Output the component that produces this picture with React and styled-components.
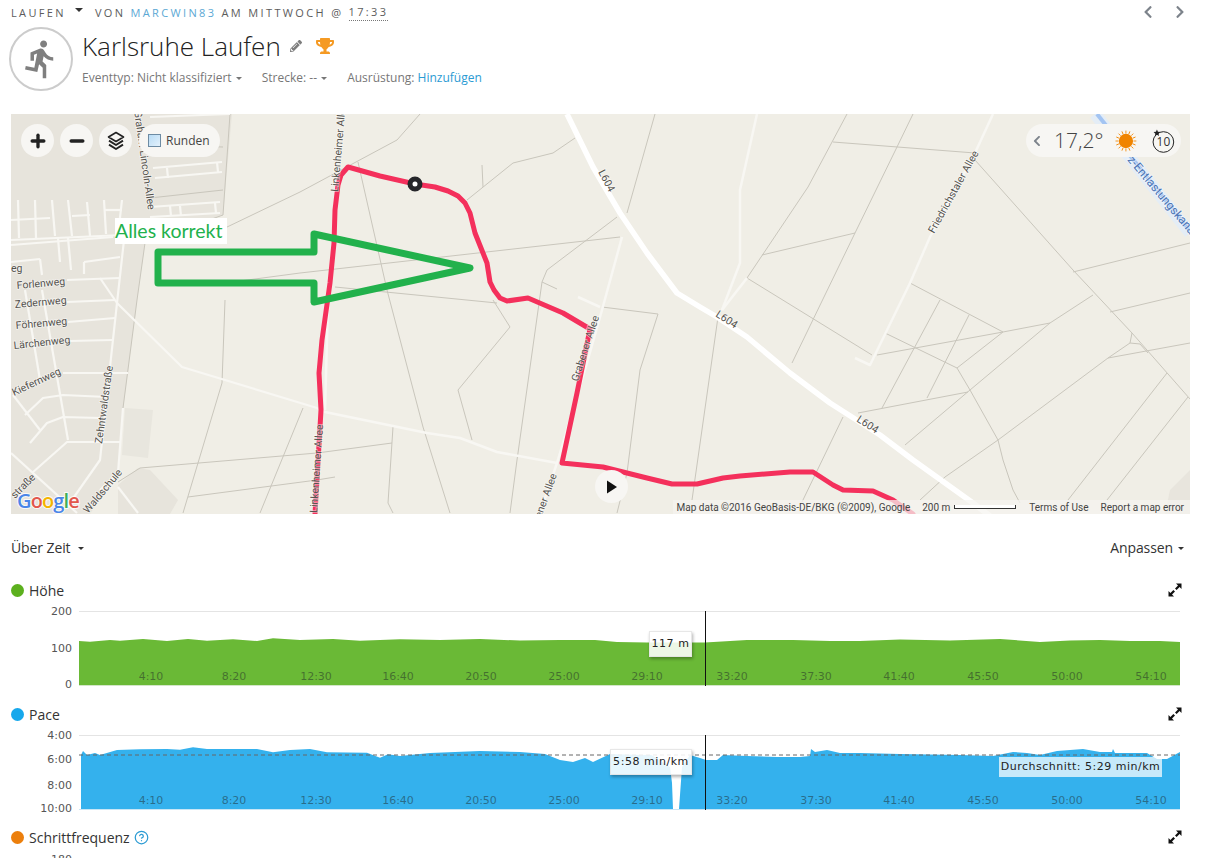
import React from 'react';
import styled, { createGlobalStyle } from 'styled-components';
import { FaPencilAlt, FaTrophy, FaChevronLeft, FaChevronRight } from 'react-icons/fa';
import { MdDirectionsRun } from 'react-icons/md';
import { Plus, Minus, CircleHelp } from 'lucide-react';

const GREY_LINES = [
  '420,114 397,140 300,192 225,228',
  '358,162 387,290 423,427 450,513',
  '240,281 300,273 620,237',
  '335,287 497,303',
  '482,165 483,187',
  '467,200 513,163 553,153 575,138',
  '655,114 627,213',
  '617,217 547,270 542,282 517,460 510,513',
  '542,282 557,289',
  '493,300 510,327 458,390 472,440',
  '602,307 658,314 640,370 627,473 617,513',
  '393,427 388,503 393,513',
  '118,482 140,468 317,453 392,443',
  '188,497 317,480 335,477',
  '225,300 222,383 183,513',
  '303,408 260,513',
  '847,114 808,187 747,278',
  '913,114 897,147 855,233 792,363',
  '833,142 975,153',
  '855,233 762,255',
  '975,160 1073,270 1132,333 1190,399',
  '1190,243 1073,272',
  '1093,295 1050,323 970,390 905,445',
  '1190,293 1110,312',
  '747,278 872,355',
  '910,283 1003,332 957,368',
  '885,333 957,368 970,390 998,440 1003,460 1013,490 1020,503',
  '877,355 1003,332 1050,323',
  '940,300 882,408',
  '969,315 927,398',
  '858,413 968,392',
  '843,417 802,502',
  '718,317 692,500',
  '1132,333 1130,343 1108,358 998,440 945,477 920,500',
  '1130,343 1140,344 1148,353',
  '1108,358 1190,343',
  '1167,373 1068,500',
  '1188,397 1107,500',
  '145,243 137,300 123,408',
  '230,114 223,215 145,243',
  '150,198 223,190',
  '150,145 223,147',
];

const TOWN_ROADS = [
  '150,117 230,114',
  '153,168 222,162', '155,178 222,172', '167,168 168,178', '217,162 218,172',
  '150,207 220,202', '150,217 220,213', '170,206 171,216', '180,206 181,216', '215,203 216,213',
  '11,240 123,235', '11,245 113,237',
  '18,200 19,238', '35,200 36,238', '52,200 55,236', '68,200 72,236', '87,202 90,236', '104,200 106,234', '122,200 118,235',
  '11,220 50,218', '72,216 90,215', '104,210 122,210',
  '58,238 60,262', '68,238 71,270', '84,262 120,257', '84,262 84,274',
  '11,262 40,259', '40,259 42,275',
  '67,280 120,278', '100,278 117,303',
  '67,302 115,300', '68,322 115,318', '70,341 112,340', '63,373 128,373',
  '25,290 40,380', '42,290 68,440',
  '124,240 117,303 110,367 100,460 67,507',
  '13,395 40,430', '25,415 43,398 63,395 107,397', '30,443 47,423 63,417 100,418',
  '11,453 77,513', '32,473 67,442 120,442',
  '123,408 118,473 100,490', '118,487 138,513',
  '117,303 182,367 317,408',
];

const THIN_ROADS = [
  '993,114 975,153 930,237 910,283 870,365 855,358',
  '757,114 740,190 740,263 722,310',
  '747,278 722,310',
  '622,237 602,310 587,363 557,463 540,513',
  '578,297 600,307',
  '317,408 325,412 427,433 460,438 497,452 557,463',
  '328,303 325,410',
];

const MAIN_ROAD = '567,114 593,167 620,213 647,253 677,293 700,307 717,317 747,337 790,373 830,403 880,435 913,460 973,503 990,516';

const ROUTE = '315,514 321,410 319,373 322,340 330,283 334,243 335,210 338,185 341,175 348,167 380,176 415,184 435,187 448,191 458,196 465,203 470,213 475,233 481,248 487,263 490,282 494,290 500,298 507,301 528,298 563,313 590,329 577,393 562,463 603,467 647,478 672,484 683,484 697,484 723,478 740,476 790,472 813,472 833,485 843,490 873,491 893,500 913,514';

const ARROW = '158,283 158,252 314,252 314,234 470,268 314,302 314,283';

const MAP_LABELS = [
  { text: 'Graham-Lincoln-Allee', x: 148, y: 210, angle: 82, end: true },
  { text: 'Linkenheimer Allee', x: 338, y: 192, angle: -85 },
  { text: 'Linkenheimer Allee', x: 317, y: 513, angle: -86 },
  { text: 'Grabener Allee', x: 578, y: 382, angle: -72 },
  { text: 'Grabener Allee', x: 557, y: 475, angle: -70, end: true },
  { text: 'Friedrichstaler Allee', x: 934, y: 234, angle: -61 },
  { text: 'L604', x: 598, y: 172, angle: 62 },
  { text: 'L604', x: 715, y: 316, angle: 33 },
  { text: 'L604', x: 856, y: 421, angle: 33 },
  { text: 'Zehntwaldstraße', x: 102, y: 444, angle: -82 },
  { text: 'Waldschule', x: 88, y: 514, angle: -50 },
  { text: 'straße', x: 15, y: 499, angle: -45 },
  { text: 'eg', x: 11, y: 272, angle: 0 },
  { text: 'Forlenweg', x: 17, y: 289, angle: -5 },
  { text: 'Zedernweg', x: 15, y: 308, angle: -5 },
  { text: 'Föhrenweg', x: 16, y: 329, angle: -5 },
  { text: 'Lärchenweg', x: 14, y: 349, angle: -6 },
  { text: 'Kiefernweg', x: 14, y: 396, angle: -25 },
];

const TIME_TICKS = [
  ['4:10', 151], ['8:20', 234], ['12:30', 316], ['16:40', 398], ['20:50', 481], ['25:00', 564], ['29:10', 647],
  ['33:20', 732], ['37:30', 816], ['41:40', 899], ['45:50', 983], ['50:00', 1067], ['54:10', 1151],
];

const HEIGHT_PROFILE = [
  [79, 641], [90, 641.7], [110, 640], [120, 640.7], [143, 639], [167, 641], [188, 639], [207, 640.7], [233, 639.3],
  [257, 641], [273, 638.3], [300, 640], [333, 639], [360, 640.7], [400, 639.3], [440, 640], [480, 639], [520, 640.5],
  [560, 640], [595, 640], [617, 642], [647, 642.5], [705, 642.5], [747, 640], [793, 640], [830, 641], [860, 641],
  [900, 639.5], [950, 640.5], [1000, 639], [1040, 642], [1070, 640.5], [1100, 640], [1130, 641], [1160, 641], [1180, 642],
];

const PACE_PROFILE = [
  [81, 755], [83, 751], [87, 755], [95, 753], [100, 755], [117, 750], [140, 749.3], [167, 749], [180, 749.7], [193, 747.3],
  [207, 749], [257, 749], [273, 752.3], [290, 750], [310, 749], [327, 752.3], [367, 752.7], [380, 757.7], [388, 754.3],
  [400, 756], [430, 753], [480, 751], [520, 752], [545, 754], [560, 760], [573, 762], [585, 758], [593, 762], [610, 754],
  [643, 755], [651, 755], [655, 757], [670, 767], [672, 783], [673, 809], [679, 809], [682, 767], [690, 755], [700, 758],
  [706, 760], [717, 760], [723, 755], [747, 756], [777, 757], [800, 757], [810, 756], [811, 749], [815, 752], [827, 750],
  [840, 753], [860, 753], [900, 754], [960, 755], [993, 756], [1013, 752], [1027, 753], [1040, 755], [1057, 751], [1083, 749],
  [1100, 752], [1112, 752], [1113, 749], [1115, 753], [1147, 753], [1157, 759], [1167, 759], [1180, 752],
];

const GlobalStyle = createGlobalStyle`
  html, body {
    margin: 0;
    height: 858px;
    overflow: hidden;
    background: #fff;
  }
  body {
    font-family: "Open Sans", "Liberation Sans", sans-serif;
    color: #333;
  }
`;

const Page = styled.div`
  width: 1205px;
`;

const MetaRow = styled.div`
  display: flex;
  align-items: center;
  justify-content: space-between;
  height: 24px;
  padding: 0 18px 0 11px;
`;

const Breadcrumb = styled.div`
  display: flex;
  align-items: center;
  font-size: 11px;
  letter-spacing: 2.35px;
  color: #5c5c5c;
  white-space: pre;
`;

const Caret = styled.span`
  width: 0;
  height: 0;
  margin: ${p => p.$margin || '0'};
  border-left: ${p => p.$size || 4}px solid transparent;
  border-right: ${p => p.$size || 4}px solid transparent;
  border-top: ${p => p.$size || 4}px solid ${p => p.$color || '#333'};
  display: inline-block;
`;

const UserLink = styled.span`
  color: #5ba8d4;
`;

const TimeStamp = styled.span`
  border-bottom: 1px dotted #777;
  padding-bottom: 1px;
`;

const Pager = styled.div`
  display: flex;
  gap: 18px;
  color: #7d838b;
  font-size: 14px;
`;

const Head = styled.header`
  display: flex;
  gap: 9px;
  margin: 3px 0 23px 9px;
  height: 64px;
`;

const Avatar = styled.div`
  width: 60px;
  height: 60px;
  border: 2px solid #ccc;
  border-radius: 50%;
  display: flex;
  align-items: center;
  justify-content: center;
  color: #7f7f7f;
  font-size: 42px;
`;

const HeadText = styled.div`
  display: flex;
  flex-direction: column;
`;

const TitleRow = styled.div`
  display: flex;
  align-items: center;
  height: 38px;
`;

const Title = styled.h1`
  margin: 0;
  font-size: 26px;
  font-weight: 300;
  color: #222;
  white-space: nowrap;
`;

const EditIcon = styled(FaPencilAlt)`
  color: #7d7d7d;
  font-size: 12px;
  margin-left: 9px;
`;

const TrophyIcon = styled(FaTrophy)`
  color: #f59a23;
  font-size: 18px;
  margin-left: 14px;
`;

const InfoRow = styled.div`
  display: flex;
  align-items: center;
  margin-top: 4px;
  font-size: 12px;
  color: #777;
`;

const InfoItem = styled.span`
  display: inline-flex;
  align-items: center;
  margin-right: ${p => p.$gap}px;
  white-space: pre;
`;

const InfoLink = styled.span`
  color: #2b9bd3;
`;

const MapFrame = styled.section`
  position: relative;
  width: 1179px;
  height: 400px;
  margin-left: 11px;
  overflow: hidden;
  background: #f0eee6;
`;

const MapSvg = styled.svg`
  display: block;
`;

const GreyLine = styled.polyline`
  fill: none;
  stroke: #c9c6bc;
  stroke-width: 1;
`;

const RoadLine = styled.polyline`
  fill: none;
  stroke: ${p => p.$color || '#f8f7f3'};
  stroke-width: ${p => p.$width || 2.5}px;
  stroke-linejoin: round;
`;

const RoutePath = styled.polyline`
  fill: none;
  stroke: #f4305c;
  stroke-width: 5px;
  stroke-linejoin: round;
  stroke-linecap: round;
`;

const ArrowPath = styled.polygon`
  fill: none;
  stroke: #22b14c;
  stroke-width: 7px;
  stroke-linejoin: round;
`;

const MapLabel = styled.text`
  font-family: Roboto, "Liberation Sans", sans-serif;
  font-size: 10.5px;
  fill: #55534e;
  paint-order: stroke;
  stroke: rgba(255, 255, 255, 0.55);
  stroke-width: 1.5px;
`;

const CanalLabel = styled(MapLabel)`
  font-size: 12px;
  fill: #4b74b5;
`;

const GoogleMark = styled.text`
  font-family: "Open Sans", "Liberation Sans", sans-serif;
  font-size: 20px;
  font-weight: 600;
  letter-spacing: -0.9px;
  paint-order: stroke;
  stroke: rgba(255, 255, 255, 0.8);
  stroke-width: 2px;
`;

const Controls = styled.div`
  position: absolute;
  left: 10px;
  top: 10px;
  display: flex;
  gap: 6px;
`;

const RoundButton = styled.div`
  width: 33px;
  height: 33px;
  border-radius: 50%;
  background: #f7f6f3;
  display: flex;
  align-items: center;
  justify-content: center;
  color: #222;
`;

const LapsPill = styled.div`
  display: flex;
  align-items: center;
  gap: 5px;
  height: 33px;
  width: 81px;
  margin-left: 1px;
  box-sizing: border-box;
  padding-left: 9px;
  border-radius: 17px;
  background: #f7f6f3;
  font-size: 12px;
  color: #444;
`;

const CheckBox = styled.span`
  width: 11px;
  height: 11px;
  border: 1px solid #6d8ba3;
  background: linear-gradient(135deg, #b9dcf5, #e3f1fb);
`;

const WeatherPill = styled.div`
  position: absolute;
  right: 9px;
  top: 10px;
  width: 155px;
  height: 33px;
  box-sizing: border-box;
  padding: 0 5px;
  display: flex;
  align-items: center;
  border-radius: 17px;
  background: #f7f6f3;
  color: #7d838b;
  font-size: 12px;
`;

const Temperature = styled.span`
  margin: 0 12px 0 11px;
  font-size: 21px;
  font-weight: 300;
  color: #444;
  line-height: 1;
`;

const WindSvg = styled.svg`
  margin-left: 13px;
`;

const WindText = styled.text`
  font-family: "Open Sans", "Liberation Sans", sans-serif;
  font-size: 12px;
  fill: #333;
`;

const PlayButton = styled(RoundButton)`
  position: absolute;
  left: 584px;
  top: 356px;
`;

const AnnotationNote = styled.div`
  position: absolute;
  left: 104px;
  top: 104px;
  width: 112px;
  height: 26px;
  box-sizing: border-box;
  background: #fff;
  color: #22b14c;
  font-family: Lato, "Liberation Sans", sans-serif;
  font-size: 19.5px;
  line-height: 26px;
  white-space: nowrap;
`;

const Attribution = styled.div`
  position: absolute;
  right: 0;
  bottom: 0;
  display: flex;
  align-items: center;
  height: 14px;
  background: rgba(245, 244, 240, 0.72);
  font-family: Roboto, "Liberation Sans", sans-serif;
  font-size: 10px;
  color: #444;
  white-space: nowrap;
`;

const AttributionItem = styled.span`
  display: flex;
  align-items: center;
  padding: 0 ${p => p.$right || 6}px 0 ${p => p.$left || 6}px;
`;

const ScaleBar = styled.span`
  display: inline-block;
  width: 60px;
  height: 3px;
  margin-left: 4px;
  border: 1px solid #333;
  border-top: none;
  background: #fff;
`;

const ViewBar = styled.div`
  display: flex;
  justify-content: space-between;
  align-items: center;
  height: 18px;
  margin-top: 24px;
  padding: 0 21px 0 11px;
  font-size: 14px;
  letter-spacing: -0.1px;
  color: #333;
`;

const ViewItem = styled.span`
  display: inline-flex;
  align-items: center;
`;

const ChartHeader = styled.div`
  display: flex;
  align-items: center;
  height: 16px;
  margin-top: ${p => p.$top || 0}px;
  padding: 0 23px 0 11px;
  font-size: 14px;
  color: #333;
`;

const Dot = styled.span`
  width: 13px;
  height: 13px;
  border-radius: 50%;
  margin-right: 5px;
  background: ${p => p.$color};
`;

const ChartName = styled.span`
  flex: none;
`;

const HelpIcon = styled(CircleHelp)`
  margin-left: 4px;
  color: #2b9bd3;
`;

const ExpandSvg = styled.svg`
  margin-left: auto;
`;

const ChartWrap = styled.div`
  position: relative;
  height: ${p => p.$height}px;
  margin-top: 6px;
`;

const ChartSvg = styled.svg`
  display: block;
`;

const AxisText = styled.text`
  font-family: "DejaVu Sans", sans-serif;
  font-size: 11px;
  fill: #555;
  dominant-baseline: middle;
`;

const TickText = styled(AxisText)`
  fill: rgba(30, 40, 40, 0.5);
  text-anchor: middle;
`;

const ChartTip = styled.div`
  position: absolute;
  left: ${p => p.$left}px;
  top: ${p => p.$top}px;
  width: ${p => p.$width}px;
  height: 26px;
  box-sizing: border-box;
  border: 1px solid rgba(225, 225, 225, 0.8);
  background: rgba(255, 255, 255, 0.88);
  box-shadow: 1px 2px 3px rgba(0, 0, 0, 0.3);
  font-family: "DejaVu Sans", sans-serif;
  font-size: 11px;
  letter-spacing: 0.55px;
  line-height: 24px;
  text-align: center;
  color: #222;
  white-space: nowrap;
`;

const AverageTag = styled.div`
  position: absolute;
  left: 999px;
  top: 29px;
  width: 163px;
  height: 20px;
  background: rgba(255, 255, 255, 0.72);
  font-family: "DejaVu Sans", sans-serif;
  font-size: 11px;
  letter-spacing: 0.5px;
  line-height: 20px;
  text-align: center;
  color: #222;
  white-space: nowrap;
`;

const ExpandIcon = () => (
  <ExpandSvg width="14" height="14" viewBox="0 0 14 14">
    <path d="M8 0.5h5.5V6L11.6 4.1 8.6 7 7 5.4l3-3zM6 13.5H0.5V8l1.9 1.9 3-2.9L7 8.6l-3 3z" fill="#111" />
  </ExpandSvg>
);

const LayersIcon = () => (
  <svg width="18" height="20" viewBox="0 0 18 20">
    <path d="M9 1.5 16.5 6 9 10.5 1.5 6Z" fill="none" stroke="#222" strokeWidth="1.6" strokeLinejoin="round" />
    <path d="M2 9.7 9 14l7-4.3M2 13.7 9 18l7-4.3" fill="none" stroke="#222" strokeWidth="2" strokeLinejoin="round" />
  </svg>
);

const SunIcon = () => {
  const rays = Array.from({ length: 16 }, (_, i) => (i * 360) / 16);
  return (
    <svg width="22" height="22" viewBox="0 0 22 22">
      {rays.map(a => (
        <line key={a} x1="11" y1="0.5" x2="11" y2="3.4" stroke="#f28c0f" strokeWidth="0.9" transform={`rotate(${a} 11 11)`} />
      ))}
      <circle cx="11" cy="11" r="7.2" fill="#f08400" />
    </svg>
  );
};

const WindIcon = () => (
  <WindSvg width="26" height="26" viewBox="0 0 26 26">
    <circle cx="13.5" cy="14" r="10.4" fill="none" stroke="#222" strokeWidth="1" />
    <path d="M7 1.5l1 2.2 2.4.3-1.8 1.6.5 2.4-2.1-1.2-2.1 1.2.5-2.4L3.6 4l2.4-.3z" fill="#222" />
    <WindText x="13.5" y="18.3" textAnchor="middle">10</WindText>
  </WindSvg>
);

const AreaChart = ({ top, height, profile, color, base, line, yTicks, avgY }) => {
  const area = `${profile[0][0]},${base} ${profile.map(p => p.join(',')).join(' ')} ${profile[profile.length - 1][0]},${base}`;
  return (
    <ChartSvg width="1205" height={height} viewBox={`0 ${top} 1205 ${height}`}>
      <line x1="79" x2="1180" y1={yTicks[0][1] + 0.5} y2={yTicks[0][1] + 0.5} stroke="#e4e4e4" />
      {yTicks.map(([label, y]) => (
        <AxisText key={label} x="72" y={y + 1} textAnchor="end">{label}</AxisText>
      ))}
      <polygon points={area} fill={color} />
      <line x1="79" x2="1180" y1={base + 0.5} y2={base + 0.5} stroke={line} />
      {avgY && <line x1="79" x2="1180" y1={avgY} y2={avgY} stroke="#666" strokeDasharray="4 3" />}
      {TIME_TICKS.map(([label, x]) => (
        <TickText key={label} x={x} y={base - 8}>{label}</TickText>
      ))}
      <line x1="705.5" x2="705.5" y1={yTicks[0][1]} y2={base + 1} stroke="#111" />
    </ChartSvg>
  );
};

const App = () => (
  <Page>
    <GlobalStyle />
    <MetaRow>
      <Breadcrumb>
        LAUFEN
        <Caret $margin="0 12px 4px 9px" />
        VON <UserLink>MARCWIN83</UserLink> AM MITTWOCH @ <TimeStamp>17:33</TimeStamp>
      </Breadcrumb>
      <Pager>
        <FaChevronLeft />
        <FaChevronRight />
      </Pager>
    </MetaRow>

    <Head>
      <Avatar><MdDirectionsRun /></Avatar>
      <HeadText>
        <TitleRow>
          <Title>Karlsruhe Laufen</Title>
          <EditIcon />
          <TrophyIcon />
        </TitleRow>
        <InfoRow>
          <InfoItem $gap={20}>Eventtyp: Nicht klassifiziert <Caret $size={3} $color="#777" $margin="2px 0 0 1px" /></InfoItem>
          <InfoItem $gap={20}>Strecke: -- <Caret $size={3} $color="#777" $margin="2px 0 0 1px" /></InfoItem>
          <InfoItem>Ausrüstung: <InfoLink>Hinzufügen</InfoLink></InfoItem>
        </InfoRow>
      </HeadText>
    </Head>

    <MapFrame>
      <MapSvg width="1179" height="400" viewBox="11 114 1179 400">
        <polygon points="11,114 232,114 223,215 145,243 137,300 123,410 118,470 90,514 11,514" fill="#e7e4dc" />
        <polygon points="125,408 153,410 148,458 122,455" fill="#e8e6de" />
        <polygon points="138,468 150,470 178,500 170,514 118,514 118,485" fill="#e7e4dc" />
        <polygon points="1190,470 1170,490 1165,514 1190,514" fill="#e8e5dd" />
        <line x1="1095" y1="114" x2="1190" y2="233" stroke="#e4edf6" strokeWidth="12" />
        <line x1="1097" y1="114" x2="1190" y2="231" stroke="#a3c4f2" strokeWidth="4" />
        {GREY_LINES.map(points => <GreyLine key={points} points={points} />)}
        {TOWN_ROADS.map(points => <RoadLine key={points} points={points} $width={2.2} />)}
        {THIN_ROADS.map(points => <RoadLine key={points} points={points} />)}
        <RoadLine points={MAIN_ROAD} $color="#ffffff" $width={5.5} />
        <RoutePath points={ROUTE} />
        {MAP_LABELS.map(({ text, x, y, angle, end }) => (
          <MapLabel
            key={`${text}${x}`}
            x={x}
            y={y}
            textAnchor={end ? 'end' : 'start'}
            transform={`rotate(${angle} ${x} ${y})`}
          >
            {text}
          </MapLabel>
        ))}
        <CanalLabel x="1127" y="160" transform="rotate(50 1127 160)">z-Entlastungskanal</CanalLabel>
        <circle cx="415" cy="184" r="5" fill="#fff" stroke="#26262a" strokeWidth="5" />
        <ArrowPath points={ARROW} />
        <GoogleMark x="17" y="508">
          <tspan fill="#4a86e8">G</tspan>
          <tspan fill="#e2574c">o</tspan>
          <tspan fill="#f4b400">o</tspan>
          <tspan fill="#4a86e8">g</tspan>
          <tspan fill="#3faf5a">l</tspan>
          <tspan fill="#e2574c">e</tspan>
        </GoogleMark>
      </MapSvg>

      <Controls>
        <RoundButton><Plus size={20} strokeWidth={4} /></RoundButton>
        <RoundButton><Minus size={20} strokeWidth={4} /></RoundButton>
        <RoundButton><LayersIcon /></RoundButton>
        <LapsPill><CheckBox />Runden</LapsPill>
      </Controls>

      <WeatherPill>
        <FaChevronLeft />
        <Temperature>17,2°</Temperature>
        <SunIcon />
        <WindIcon />
      </WeatherPill>

      <PlayButton>
        <svg width="12" height="14" viewBox="0 0 12 14"><path d="M1 0.5 11 7 1 13.5Z" fill="#111" /></svg>
      </PlayButton>

      <AnnotationNote>Alles korrekt</AnnotationNote>

      <Attribution>
        <AttributionItem $left={4}>Map data ©2016 GeoBasis-DE/BKG (©2009), Google</AttributionItem>
        <AttributionItem>200 m<ScaleBar /></AttributionItem>
        <AttributionItem $left={7}>Terms of Use</AttributionItem>
        <AttributionItem>Report a map error</AttributionItem>
      </Attribution>
    </MapFrame>

    <ViewBar>
      <ViewItem>Über Zeit<Caret $size={3} $margin="2px 0 0 7px" /></ViewItem>
      <ViewItem>Anpassen<Caret $size={3} $margin="2px 0 0 5px" /></ViewItem>
    </ViewBar>

    <ChartHeader $top={26}>
      <Dot $color="#5cb01e" />
      <ChartName>Höhe</ChartName>
      <ExpandIcon />
    </ChartHeader>
    <ChartWrap $height={96}>
      <AreaChart
        top={604}
        height={96}
        profile={HEIGHT_PROFILE}
        color="#6ab936"
        base={685}
        line="#d3e6c8"
        yTicks={[['200', 611], ['100', 648], ['0', 684]]}
      />
      <ChartTip $left={649} $top={27} $width={43}>117 m</ChartTip>
    </ChartWrap>

    <ChartHeader $top={6}>
      <Dot $color="#16a8ec" />
      <ChartName>Pace</ChartName>
      <ExpandIcon />
    </ChartHeader>
    <ChartWrap $height={96}>
      <AreaChart
        top={728}
        height={96}
        profile={PACE_PROFILE}
        color="#34b1ed"
        base={809}
        line="#c8e6f6"
        yTicks={[['4:00', 735], ['6:00', 759], ['8:00', 785], ['10:00', 808]]}
        avgY={755}
      />
      <ChartTip $left={610} $top={21} $width={82}>5:58 min/km</ChartTip>
      <AverageTag>Durchschnitt: 5:29 min/km</AverageTag>
    </ChartWrap>

    <ChartHeader $top={5}>
      <Dot $color="#ec7f0c" />
      <ChartName>Schrittfrequenz</ChartName>
      <HelpIcon size={15} />
      <ExpandIcon />
    </ChartHeader>
    <ChartWrap $height={20}>
      <ChartSvg width="1205" height="20" viewBox="0 851 1205 20">
        <AxisText x="72" y="860" textAnchor="end">180</AxisText>
      </ChartSvg>
    </ChartWrap>
  </Page>
);

export default App;
